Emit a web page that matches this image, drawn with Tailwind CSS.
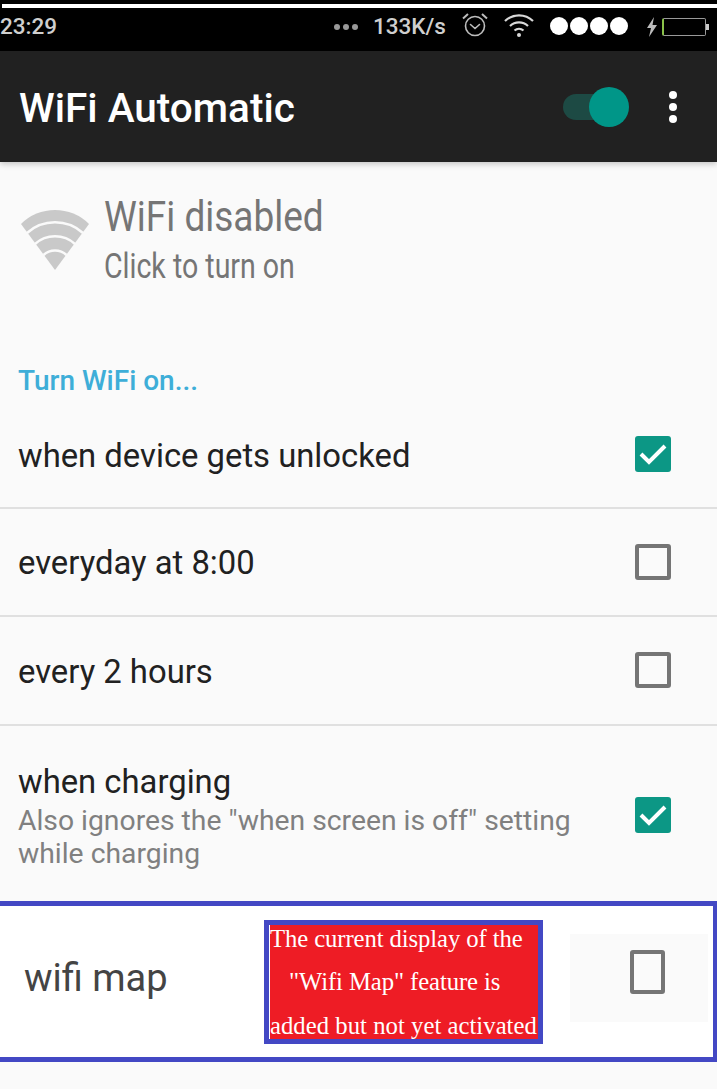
<!DOCTYPE html>
<html lang="en">
<head>
  <meta charset="UTF-8" />
  <meta name="viewport" content="width=device-width, initial-scale=1.0" />
  <title>WiFi Automatic</title>
  <script src="https://cdn.jsdelivr.net/npm/@tailwindcss/browser@4"></script>
</head>
<body class="bg-[#fafafa] font-['Roboto',sans-serif] h-[1089px] w-[717px] overflow-hidden">

  <!-- Status bar -->
  <div class="h-[51px] bg-black pt-[4px]">
    <div class="h-[4px] ml-[2px] bg-white"></div>
    <div class="flex items-center h-[37px] text-[#cfcfcf] text-[22.500px] font-medium">
      <span class="w-[334px]">23:29</span>
      <div class="flex gap-[3px] w-[39px]">
        <span class="w-[6px] h-[6px] rounded-full bg-[#999]"></span>
        <span class="w-[6px] h-[6px] rounded-full bg-[#999]"></span>
        <span class="w-[6px] h-[6px] rounded-full bg-[#999]"></span>
      </div>
      <span class="w-[88px]">133K/s</span>
      <svg class="w-[28px] h-[28px] mr-[14px] -mt-[3px]" viewBox="0 0 28 28" fill="none" stroke="#bdbdbd" stroke-width="1.6">
        <circle cx="14" cy="15" r="9.500"/>
        <path d="M9.500 13.500l4.500 4 4.500-4" stroke-linecap="round"/>
        <path d="M2 7.500L7 3M26 7.500L21 3" stroke-width="2"/>
      </svg>
      <svg class="w-[32px] h-[26px] mr-[15px] -mt-[3px]" viewBox="0 0 32 26" fill="none" stroke="#d8d8d8" stroke-width="2.200">
        <path d="M2 9a20 20 0 0 1 28 0"/>
        <path d="M7 14a13 13 0 0 1 18 0"/>
        <path d="M11.500 18.500a7 7 0 0 1 9 0"/>
        <circle cx="16" cy="23" r="2" fill="#d8d8d8" stroke="none"/>
      </svg>
      <div class="flex gap-[2px] w-[96px] -mt-[1px]">
        <span class="w-[18px] h-[18px] rounded-full bg-white"></span>
        <span class="w-[18px] h-[18px] rounded-full bg-white"></span>
        <span class="w-[18px] h-[18px] rounded-full bg-white"></span>
        <span class="w-[18px] h-[18px] rounded-full bg-white"></span>
      </div>
      <svg class="w-[12px] h-[20px] mr-[4px]" viewBox="0 0 12 20" fill="#bdbdbd"><path d="M8 0L1 11h4l-2 9 8-12H6.500z"/></svg>
      <div class="w-[44px] h-[18px] border border-[#999] border-l-[2px] border-l-[#8bc34a] rounded-[2px]"></div>
      <span class="w-[3px] h-[6px] bg-[#ccc]"></span>
    </div>
  </div>

  <!-- App bar -->
  <header class="h-[111px] bg-[#212121] flex items-center pl-[19px] shadow-[0_2px_6px_rgba(0,0,0,0.22)] relative">
    <h1 class="text-[40.500px] font-medium text-white w-[544px] mt-[4px]">WiFi Automatic</h1>
    <div class="w-[66px] flex items-center">
      <div class="w-[36px] h-[26px] rounded-l-full bg-[#1d4a44]"></div>
      <div class="w-[40px] h-[40px] rounded-full bg-[#009688] -ml-[10px]"></div>
    </div>
    <div class="flex flex-col gap-[4px] ml-[40px]">
      <span class="w-[8px] h-[8px] rounded-full bg-white"></span>
      <span class="w-[8px] h-[8px] rounded-full bg-white"></span>
      <span class="w-[8px] h-[8px] rounded-full bg-white"></span>
    </div>
  </header>

  <!-- WiFi state -->
  <section class="h-[201px] flex pl-[21px] pt-[32px]">
    <svg class="w-[68px] h-[62px] mt-[15px] mr-[15px]" viewBox="0 0 68 62">
      <path d="M34 61L0 15a48 48 0 0 1 68 0z" fill="#c9c9c9"/>
      <path d="M6 24a42 42 0 0 1 56 0M14 35a30 30 0 0 1 40 0M22.500 46a17 17 0 0 1 23 0" fill="none" stroke="#fafafa" stroke-width="2.500"/>
    </svg>
    <div>
      <div class="text-[43px] leading-[45px] text-[#757575] scale-x-[0.86] origin-left">WiFi disabled</div>
      <div class="text-[35px] leading-[40px] mt-[8px] text-[#757575] scale-x-[0.815] origin-left">Click to turn on</div>
    </div>
  </section>

  <div class="h-[59px] pl-[18px] text-[28px] font-medium leading-[36px] text-[#3eaed8]">Turn WiFi on...</div>

  <!-- Options -->
  <ul class="text-[32.800px] text-[#212121]">
    <li class="h-[88px] border-b-2 border-[#e0e0e0] pr-[46px] pl-[18px] flex items-center justify-between -mt-[1px] pb-[20px]">
      <span class="mt-[6px]">when device gets unlocked</span>
      <span class="w-[36px] h-[36px] rounded-[3px] bg-[#0c9785] flex items-center justify-center">
        <svg class="w-[28px] h-[22px]" viewBox="0 0 28 22" fill="none" stroke="#fff" stroke-width="4"><path d="M2 11l8 8L26 3"/></svg>
      </span>
    </li>
    <li class="h-[108px] border-b-2 border-[#e0e0e0] pr-[46px] pl-[18px] flex items-center justify-between">
      <span class="mt-[4px]">everyday at 8:00</span>
      <span class="w-[36px] h-[36px] rounded-[3px] border-[4px] border-[#757575]"></span>
    </li>
    <li class="h-[109px] border-b-2 border-[#e0e0e0] pr-[46px] pl-[18px] flex items-center justify-between">
      <span class="mt-[4px]">every 2 hours</span>
      <span class="w-[36px] h-[36px] rounded-[3px] border-[4px] border-[#757575] -mt-[2px]"></span>
    </li>
    <li class="h-[175px] pt-[3px] pr-[46px] pl-[18px] flex items-center justify-between">
      <div>
        <div class="leading-[43px]">when charging</div>
        <div class="text-[28.300px] leading-[33px] text-[#808080] w-[570px]">Also ignores the "when screen is off" setting while charging</div>
      </div>
      <span class="w-[36px] h-[36px] rounded-[3px] bg-[#0c9785] flex items-center justify-center">
        <svg class="w-[28px] h-[22px]" viewBox="0 0 28 22" fill="none" stroke="#fff" stroke-width="4"><path d="M2 11l8 8L26 3"/></svg>
      </span>
    </li>
  </ul>

  <!-- Notice row -->
  <section class="h-[161px] bg-white border-y-[5px] border-r-[4px] border-[#4348c4] flex items-center">
    <span class="w-[264px] pl-[24px] text-[38px] text-[#444] -mt-[6px]">wifi map</span>
    <div class="w-[279px] h-[124px] border-[5px] border-[#4348c4] bg-[#ee1c25] text-white font-['Liberation_Serif',serif] text-[26px] leading-[43.500px] whitespace-nowrap">
      <div class="border-l border-white h-full overflow-hidden">
        <div class="-mt-[8px] scale-x-[0.95] origin-left">
          <div class="tracking-[-0.1px]">The current display of the</div>
          <div class="pl-[20px] tracking-[-0.1px]">"Wifi Map" feature is</div>
          <div class="tracking-[0.03px]">added but not yet activated</div>
        </div>
      </div>
    </div>
    <div class="w-[138px] h-[88px] ml-[27px] -mt-[7px] bg-[#fafafa] flex items-center justify-center">
      <span class="w-[35px] h-[44px] rounded-[3px] border-[4px] border-[#757575] -mt-[13px] ml-[17px]"></span>
    </div>
  </section>

</body>
</html>
